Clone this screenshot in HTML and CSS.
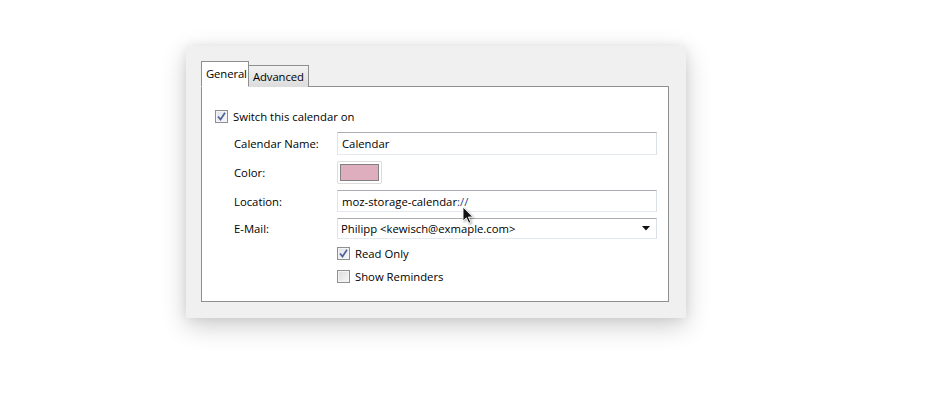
FILE: index.html
```html
<!DOCTYPE html>
<html>
<head>
<meta charset="utf-8">
<link rel="stylesheet" href="styles.css">
</head>
<body>
<div class="dialog">
  <div class="tabs">
    <div class="tab tab-active">General</div>
    <div class="tab">Advanced</div>
  </div>
  <div class="panel">
    <label class="check-row top-check">
      <span class="checkbox checked"><svg width="9" height="9" viewBox="0 0 9 9"><path d="M1 4.5 L3.5 7.5 L8 0.8" fill="none" stroke="#4c609a" stroke-width="1.7"/></svg></span>
      <span>Switch this calendar on</span>
    </label>
    <div class="form">
      <div class="label">Calendar Name:</div>
      <div class="field input"><span>Calendar</span></div>
      <div class="label">Color:</div>
      <div class="field"><span class="color-btn"><span class="swatch"></span></span></div>
      <div class="label">Location:</div>
      <div class="field input"><span>moz-storage-calendar<span class="slash">://</span></span></div>
      <div class="label">E-Mail:</div>
      <div class="field input select"><span>Philipp &lt;kewisch@exmaple.com&gt;</span><svg class="arrow" width="8" height="5" viewBox="0 0 8 5"><path d="M0 0 H8 L4 4.5 Z" fill="#111"/></svg></div>
      <div></div>
      <div class="checks">
        <label class="check-row">
          <span class="checkbox checked"><svg width="9" height="9" viewBox="0 0 9 9"><path d="M1 4.5 L3.5 7.5 L8 0.8" fill="none" stroke="#4c609a" stroke-width="1.7"/></svg></span>
          <span>Read Only</span>
        </label>
        <label class="check-row">
          <span class="checkbox"></span>
          <span>Show Reminders</span>
        </label>
      </div>
    </div>
  </div>
  <svg class="cursor" width="14" height="19" viewBox="0 0 14 19"><path d="M1 1 L1 15 L4.3 11.8 L6.8 17.2 L8.8 16.3 L6.4 11 L10.8 11 Z" fill="#111" stroke="#fff" stroke-width="0.9" stroke-linejoin="round"/></svg>
</div>
</body>
</html>
```
FILE: styles.css
```css
html, body {
  margin: 0;
  padding: 0;
  background: #ffffff;
}
body {
  font-family: "Open Sans", "Noto Sans", sans-serif;
  font-size: 11.3px;
  color: #000;
  padding: 46px 0 0 186px;
  min-height: 407px;
  box-sizing: border-box;
}
.dialog {
  position: relative;
  width: 500px;
  height: 272px;
  box-sizing: border-box;
  background: #f0f0f0;
  padding: 16px 17px 16px 15px;
  display: flex;
  flex-direction: column;
  box-shadow: 0 8px 24px rgba(0,0,0,0.2), 0 0 10px rgba(0,0,0,0.07);
}
.tabs {
  display: flex;
  align-items: flex-end;
  height: 25px;
  position: relative;
  z-index: 1;
  margin-bottom: -1px;
}
.tab {
  height: 22px;
  line-height: 22px;
  box-sizing: border-box;
  border: 1px solid #8e8f8f;
  border-bottom: none;
  padding: 0 4px 0 4px;
  background: linear-gradient(#f2f2f2, #dcdcdc);
  margin-left: -1px;
  letter-spacing: -0.1px;
}
.tab-active {
  height: 26px;
  line-height: 24px;
  background: #fff;
  margin-left: 0;
  padding: 0 3px 0 4px;
  z-index: 2;
  position: relative;
  border-bottom: 1px solid #fff;
  width: 48px;
}
.panel {
  flex: 1;
  background: #fff;
  border: 1px solid #8e8f8f;
  padding: 19px 11px 0 13px;
}
.check-row {
  display: flex;
  align-items: center;
  gap: 5px;
  height: 20px;
}
.checkbox {
  width: 13px;
  height: 13px;
  box-sizing: border-box;
  border: 1px solid #8f8f8f;
  background: linear-gradient(135deg, #dcdcdc, #f7f7f7);
  box-shadow: inset 0 0 0 1px #f4f4f4;
  display: flex;
  align-items: center;
  justify-content: center;
  flex: none;
}
.checkbox.checked {
  background: linear-gradient(135deg, #e0e3ea, #f8f8fa);
}
.form {
  margin-left: 19px;
  margin-top: 6px;
  display: grid;
  grid-template-columns: 103px 320px;
  grid-template-rows: 23px 23px 22px 21px auto;
  row-gap: 6px;
}
.label {
  display: flex;
  align-items: center;
}
.field {
  display: flex;
  align-items: center;
}
.input {
  box-sizing: border-box;
  border: 1px solid;
  border-color: #abadb3 #dbdfe6 #e3e9ef #e2e3ea;
  padding: 0 4px 0 4px;
  background: #fff;
}
.select {
  justify-content: space-between;
  padding-right: 6px;
  padding-left: 3px;
}
.color-btn {
  width: 45px;
  height: 23px;
  box-sizing: border-box;
  border: 1px solid #dcdcdc;
  border-radius: 2px;
  padding: 2px;
  display: flex;
  background: #fff;
}
.swatch {
  flex: 1;
  border: 1px solid #818181;
  background: #deaebe;
}
.slash {
  color: #24438c;
}
.checks {
  display: flex;
  flex-direction: column;
  gap: 3px;
  margin-top: -2px;
}
.cursor {
  position: absolute;
  left: 276px;
  top: 160px;
  filter: drop-shadow(1px 1px 1px rgba(0,0,0,0.35));
}
```
